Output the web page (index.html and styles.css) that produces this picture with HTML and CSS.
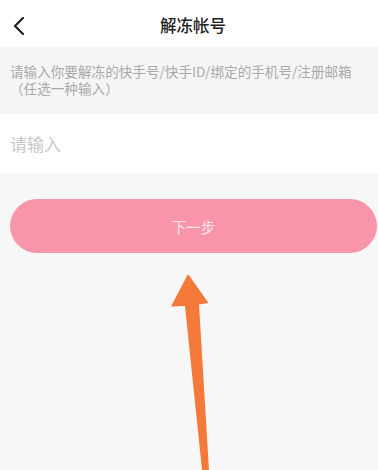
FILE: index.html
```html
<!DOCTYPE html>
<html lang="zh-CN">
<head>
<meta charset="utf-8">
<title>解冻帐号</title>
<link rel="stylesheet" href="styles.css">
</head>
<body>
<div class="page">
  <header class="nav">
    <span class="back">
      <svg width="14" height="20" viewBox="0 0 14 20"><polyline points="11,2 3,10 11,18" fill="none" stroke="#222" stroke-width="2.2" stroke-linejoin="miter" stroke-linecap="round"/></svg>
    </span>
    <h1 class="title">解冻帐号</h1>
    <span></span>
  </header>
  <div class="hint">
    <div class="hint-line">请输入你要解冻的快手号/快手ID/绑定的手机号/注册邮箱</div>
    <div class="hint-line">（任选一种输入）</div>
  </div>
  <div class="field"><span class="placeholder">请输入</span></div>
  <div class="actions"><button class="next">下一步</button></div>
  <svg class="arrow" width="378" height="470" viewBox="0 0 378 470"><polygon points="188,274 208.5,303 199,304.5 209,470 202,470 185,306 171,306.5" fill="#f57a3a"/></svg>
</div>
</body>
</html>
```
FILE: styles.css
```css
html, body {
  margin: 0;
  padding: 0;
}
body {
  background: #f7f7f7;
  font-family: "Noto Sans CJK SC", "Noto Sans", sans-serif;
}
.page {
  position: relative;
  width: 378px;
  height: 470px;
  overflow: hidden;
  background: #f7f7f7;
}
.nav {
  height: 47px;
  background: #fff;
  display: grid;
  grid-template-columns: 46px 1fr 38px;
  align-items: center;
}
.back {
  padding-left: 12px;
  display: flex;
  align-items: center;
  height: 47px;
}
.back svg {
  display: block;
  margin-top: 3px;
}
.title {
  margin: 0;
  text-align: center;
  font-size: 16.5px;
  font-weight: 500;
  color: #222;
  line-height: 47px;
  padding-top: 2px;
}
.hint {
  background: #f5f5f5;
  padding: 16px 10px 18px 10px;
  display: flex;
  flex-direction: column;
  gap: 1px;
}
.hint-line {
  font-size: 13.6px;
  line-height: 16px;
  height: 16px;
  color: #a9a9a9;
  white-space: nowrap;
}
.field {
  background: #fff;
  height: 59px;
  display: flex;
  align-items: center;
  padding-left: 10px;
}
.placeholder {
  font-size: 17px;
  color: #c8c8c8;
}
.actions {
  padding: 26px 1px 0 10px;
}
.next {
  display: block;
  width: 100%;
  height: 54px;
  border: none;
  border-radius: 27px;
  background: #f995ab;
  color: #fde8ee;
  font-family: "Noto Sans CJK SC", sans-serif;
  font-size: 14.5px;
  padding: 0;
}
.arrow {
  position: absolute;
  left: 0;
  top: 0;
  pointer-events: none;
}
```
